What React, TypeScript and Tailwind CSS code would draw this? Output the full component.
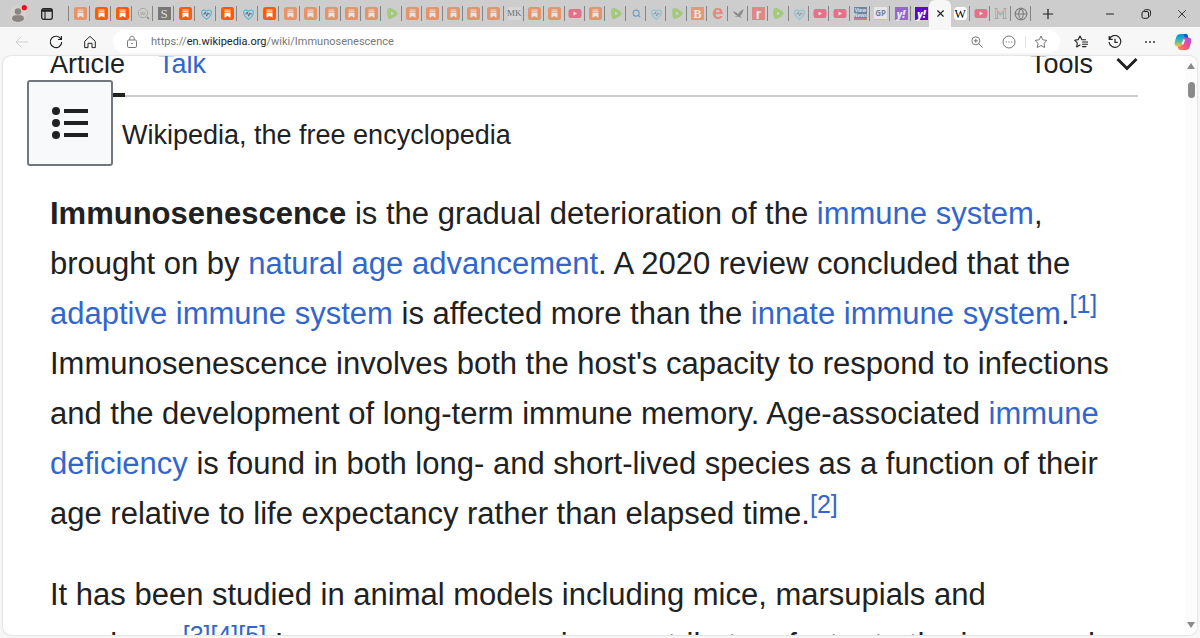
import type { ReactNode } from 'react'
import { clsx } from 'clsx'
import { Globe, Minus, Plus, Search, X } from 'lucide-react'

type TabKind =
  | 'substack' | 'finder' | 's' | 'heart' | 'rumble' | 'mk' | 'youtube' | 'search' | 'bitchute' | 'epoch'
  | 'bird' | 'r' | 'news' | 'gp' | 'yahoo' | 'active' | 'wiki' | 'mosaic' | 'globe'

type Tab = { kind: TabKind; title: string; awake?: boolean }

const tab = (kind: TabKind, title: string, awake = false): Tab => ({ kind, title, awake })
const substack = (awake = false) => tab('substack', 'Substack', awake)

const pinnedTabs: Tab[] = [
  substack(), substack(true), substack(true), tab('finder', 'Finder'), tab('s', 'S', true), substack(true),
  tab('heart', 'Health', true), substack(true), tab('heart', 'Health', true), substack(true), substack(),
]

const openTabs: Tab[] = [
  substack(), substack(), substack(), substack(), tab('rumble', 'Rumble'),
  substack(), substack(), substack(), substack(), substack(), tab('mk', 'MK'),
  substack(), substack(), tab('youtube', 'YouTube'), substack(), tab('rumble', 'Rumble'),
  tab('search', 'Search'), tab('heart', 'Health'), tab('rumble', 'Rumble'), tab('bitchute', 'BitChute'),
  tab('epoch', 'E'), tab('bird', 'Bird'), tab('r', 'R'), tab('rumble', 'Rumble'), tab('heart', 'Health'),
  tab('youtube', 'YouTube'), tab('youtube', 'YouTube'), tab('news', 'News'), tab('gp', 'GP'),
  tab('yahoo', 'Yahoo'), tab('yahoo', 'Yahoo', true), tab('active', 'Immunosenescence'),
  tab('wiki', 'Wikipedia', true), tab('youtube', 'YouTube'), tab('mosaic', 'M'), tab('globe', 'Site'),
]

function Letter({ className, children }: { className: string; children: ReactNode }) {
  return <span className={clsx('flex h-[13px] w-[13px] items-center justify-center leading-none', className)}>{children}</span>
}

function Favicon({ kind }: { kind: TabKind }) {
  switch (kind) {
    case 'substack':
      return (
        <svg viewBox="0 0 13 13" className="h-[13px] w-[13px]">
          <rect width="13" height="13" rx="2.5" fill="#ff5a0a" />
          <path d="M3.5 3h6M3.5 4.7h6" stroke="#fff" strokeWidth=".9" />
          <path d="M3.5 5.8h6v5L6.5 9l-3 1.8z" fill="#fff" />
        </svg>
      )
    case 'finder':
      return (
        <svg viewBox="0 0 13 13" className="h-[13px] w-[13px]" fill="none" stroke="#8d8573">
          <circle cx="6" cy="6" r="4.7" />
          <path d="M3.5 5.8h5M3.5 7.2h5" />
          <path d="m10 10 2 2" stroke="#5d4020" strokeWidth="1.5" />
        </svg>
      )
    case 'heart':
      return (
        <svg viewBox="0 0 14 14" className="h-[14px] w-[13px]" fill="none">
          <path d="M7 12.7C3.8 10.5 1.4 7.9 1.8 4.7 2.2 2.4 5 2.1 7 4.1 9 2 11.8 2.5 12.2 4.7 12.6 7.9 10.2 10.5 7 12.7Z" stroke="#4fb9da" strokeWidth="1.2" />
          <path d="M3.5 7h1.2l1-2.200 1.500 4.600 1.300-3.600.8 1.200h1.400" stroke="#24688e" strokeWidth=".9" />
        </svg>
      )
    case 'rumble':
      return (
        <svg viewBox="0 0 14 14" className="h-[13px] w-[13px]">
          <path d="M3.4 1.2c2.5-.3 6.9 2.4 8.6 4.5.7.9.7 1.7 0 2.6-1.7 2.1-6.1 4.8-8.6 4.5C1.2 12.4 1 4 1.7 2.5c.3-.7.8-1.2 1.7-1.3Z" fill="#7ac62c" />
          <path d="M5.5 5c1.1.4 2.2 1.1 3 2-.8.9-1.9 1.6-3 2z" fill="#e0e0e0" />
        </svg>
      )
    case 'youtube':
      return (
        <svg viewBox="0 0 14 13" className="h-[13px] w-[14px]">
          <rect x=".5" y="2" width="13" height="9" rx="2.3" fill="#f8174a" />
          <path d="M5.5 4.6v3.8L9 6.5z" fill="#fff" />
        </svg>
      )
    case 'bird':
      return (
        <svg viewBox="0 0 14 14" className="h-[13px] w-[13px]" fill="#4b4b4b">
          <path d="M1 4.500c2.400.4 4.200 1.500 5.700 3.200C7.700 5.400 9.800 3.500 13.200 2.500 11 5 11.800 7.500 8.800 9.500L10.500 12 7.400 10.500l-4.900-.3 3-.8C3.700 8.500 2.200 6.700 1 4.500Z" />
        </svg>
      )
    case 'mosaic':
      return (
        <svg viewBox="0 0 13 13" className="h-[13px] w-[13px]" fill="none" strokeWidth="1.2">
          <path d="M1.5 12V1.5l5 5 5-5V12" stroke="#e98572" />
          <path d="M3.5 12V5l3 3 3-3v7" stroke="#51a69e" />
          <path d="M.5 11.5h4M8.500 11.500h4M.5 1.500h3M9.500 1.500h3" stroke="#828282" />
        </svg>
      )
    case 'search':
      return <Search className="h-[9px] w-[9px] text-[#0d73c8]" strokeWidth={3} />
    case 'globe':
      return <Globe className="h-[14px] w-[14px] text-[#303030]" strokeWidth={1.8} />
    case 's':
      return <Letter className="bg-[#777] font-['Liberation_Serif',serif] text-[13px] text-[#ddd]">S</Letter>
    case 'mk':
      return <Letter className="bg-[#e0e0e0] font-['Liberation_Serif',serif] text-[9px] text-black">MK</Letter>
    case 'bitchute':
      return <Letter className="bg-[#ff651e] font-['Liberation_Serif',serif] text-[12px] font-bold text-white">B</Letter>
    case 'epoch':
      return <Letter className="pb-1 font-['Liberation_Sans',sans-serif] text-[20px] font-bold text-[#f34b36]">e</Letter>
    case 'r':
      return <Letter className="bg-[#ef4545] font-['Liberation_Sans',sans-serif] text-[14px] font-bold text-white">r</Letter>
    case 'news':
      return <Letter className="flex-col border-b-2 border-[#b8324d] bg-[#164174] font-['Liberation_Sans',sans-serif] text-[5px] font-bold text-white"><span>View</span><span>News</span></Letter>
    case 'gp':
      return <Letter className="border-b border-[#e2b65b] bg-white font-['Open_Sans',sans-serif] text-[8px] font-bold text-[#173b76]">GP</Letter>
    case 'yahoo':
      return <Letter className="bg-[#6001d2] font-['Open_Sans',sans-serif] text-[10px] font-extrabold italic text-white">y!</Letter>
    case 'wiki':
      return <Letter className="rounded-sm bg-white font-['Liberation_Serif',serif] text-[12px] text-black">W</Letter>
    default:
      return null
  }
}

function BrowserTab({ kind, title, awake, pinned }: Tab & { pinned?: boolean }) {
  const width = pinned ? 'w-[21px] shrink-0' : 'min-w-0 flex-1'
  if (kind === 'active') {
    return (
      <div className={clsx('relative z-10 flex justify-center', width)}>
        <button aria-label={`Close ${title}`} className="flex h-[27px] w-[22px] shrink-0 items-center justify-center rounded-t-md bg-[#f7f7f7]">
          <X className="h-[11px] w-[11px] text-[#222]" strokeWidth={2.5} />
        </button>
      </div>
    )
  }
  return (
    <button aria-label={title} className={clsx('flex h-[27px] items-center justify-center pl-0.5', width)}>
      <span className={clsx('flex flex-1 justify-center', !awake && 'opacity-50')}><Favicon kind={kind} /></span>
      <span className={clsx('h-[15px] w-px', title === 'Yahoo' && awake ? 'bg-transparent' : 'bg-[#858585]')} />
    </button>
  )
}

function TabBar() {
  return (
    <header className="flex h-[27px] shrink-0 items-center bg-[#cdcdcd]">
      <div className="flex w-[69px] shrink-0 items-center pl-[9px]">
        <button aria-label="Profile">
          <svg viewBox="0 0 18 18" className="h-[18px] w-[18px]">
            <circle cx="9" cy="9" r="9" fill="#d5d2cd" />
            <circle cx="9" cy="6.5" r="3.3" fill="#8a8580" />
            <path d="M3 14.2c0-3.6 2-3.9 6-3.9s6 .3 6 3.9c-1.4 1.7-3.4 2.7-6 2.7s-4.600-1-6-2.700Z" fill="#8a8580" />
            <circle cx="15.300" cy="2.700" r="2.600" fill="#e81123" />
          </svg>
        </button>
        <button aria-label="Tab actions" className="ml-[14px]">
          <svg viewBox="0 0 12 12" className="h-3 w-3" fill="none" stroke="#222">
            <rect x=".7" y=".7" width="10.600" height="10.600" rx="2" strokeWidth="1.300" />
            <path d="M1 2.500h10" strokeWidth="2.500" />
            <path d="M4 3v8" strokeWidth="1.100" />
          </svg>
        </button>
        <span className="ml-auto h-[15px] w-px bg-[#858585]" />
      </div>
      <nav aria-label="Tabs" className="flex min-w-0 flex-1">
        {pinnedTabs.map((t, i) => <BrowserTab key={i} {...t} pinned />)}
        {openTabs.map((t, i) => <BrowserTab key={i} {...t} />)}
      </nav>
      <div className="flex w-[169px] shrink-0 items-center text-[#222]">
        <button aria-label="New tab" className="ml-[9px]"><Plus className="h-4 w-4" strokeWidth={1.8} /></button>
        <button aria-label="Minimize" className="ml-[48px]"><Minus className="h-3 w-3" strokeWidth={2} /></button>
        <button aria-label="Restore" className="ml-6">
          <svg viewBox="0 0 12 12" className="h-3 w-3" fill="none" stroke="currentColor">
            <rect x="2" y="3.500" width="6.500" height="6.800" rx="1.500" />
            <path d="M4 3.300c0-1.300.6-1.600 1.500-1.600h2.700c1.500 0 2.300.8 2.300 2.300v2.700c0 .9-.3 1.500-1.500 1.700" />
          </svg>
        </button>
        <button aria-label="Close window" className="ml-[23px]"><X className="h-[14px] w-[14px]" strokeWidth={1.500} /></button>
      </div>
    </header>
  )
}

function Star({ list }: { list?: boolean }) {
  return (
    <svg viewBox="0 0 14 14" className="h-[14px] w-[14px]" fill="none" stroke="currentColor" strokeLinejoin="round">
      {list ? (
        <path d="M11.500 4.800 7.800 4.600 6 1 4.300 4.600.6 5.200l2.700 2.700-.6 4L6 10M8.500 7H14M8.500 9.300H14M8.500 11.600H12" strokeLinecap="round" strokeWidth="1.100" />
      ) : (
        <path d="m7 1 1.800 3.800 4.200.6-3 2.900.7 4.200L7 10.500l-3.700 2 .7-4.200-3-2.900 4.200-.6z" />
      )}
    </svg>
  )
}

function Copilot() {
  return (
    <svg viewBox="0 0 18 18" className="h-[18px] w-[18px]">
      <defs>
        <linearGradient id="cp-cool" x1="0" y1="0" x2="0" y2="1">
          <stop stopColor="#078bd9" /><stop offset=".45" stopColor="#22b9c8" /><stop offset="1" stopColor="#f4c52b" />
        </linearGradient>
        <linearGradient id="cp-warm" x1="1" y1="0" x2="0" y2="1">
          <stop stopColor="#a650ef" /><stop offset=".5" stopColor="#f04e91" /><stop offset="1" stopColor="#ff8b3d" />
        </linearGradient>
      </defs>
      <path d="M7.500 1h4.300c1.200 0 1.700.7 2 1.700l.6 2h-1.800c-1.500 0-2.100.6-2.500 1.900l-1.500 4.700c-.5 1.500-1 2-2.500 2H3.300C.7 13.300.2 11 .9 8.500L2.500 3.600C3.200 1.700 4.500 1 7.500 1Z" fill="url(#cp-cool)" />
      <path d="M10.500 17H6.200c-1.200 0-1.700-.7-2-1.700l-.6-2h1.800c1.500 0 2.100-.6 2.500-1.900l1.500-4.700c.5-1.500 1-2 2.500-2h2.800c2.600 0 3.100 2.300 2.400 4.800l-1.600 4.900c-.7 1.900-2 2.600-5 2.600Z" fill="url(#cp-warm)" />
      <path d="M9.800 1h2c1.200 0 1.700.7 2 1.700l.6 2h-2.500C10.500 4.700 10 3 9.800 1Z" fill="#2352cd" />
      <path d="M10.200 6.500 8.500 11.500" stroke="#fff" strokeWidth="1.800" />
    </svg>
  )
}

function Dots() {
  return (
    <svg viewBox="0 0 12 12" className="h-3 w-3" fill="currentColor">
      <circle cx="2" cy="6" r=".9" /><circle cx="6" cy="6" r=".9" /><circle cx="10" cy="6" r=".9" />
    </svg>
  )
}

function Toolbar() {
  return (
    <div className="flex h-[29px] shrink-0 items-center text-[#222]">
      <div className="flex w-[113px] shrink-0 items-center pl-[15px]">
        <button aria-label="Back" disabled className="text-[#cfcfcf]">
          <svg viewBox="0 0 14 14" className="h-[14px] w-[14px]" fill="none" stroke="currentColor">
            <path d="M13 7H1M6.500 1.500 1 7l5.500 5.500" />
          </svg>
        </button>
        <button aria-label="Refresh" className="ml-5">
          <svg viewBox="0 0 14 14" className="h-[14px] w-[14px]" fill="none" stroke="currentColor" strokeWidth="1.200">
            <path d="M12 4.200A5.700 5.700 0 1 0 12.700 7M12.400 1v3.500H9" />
          </svg>
        </button>
        <button aria-label="Home" className="ml-5">
          <svg viewBox="0 0 14 14" className="h-[14px] w-[14px]" fill="none" stroke="currentColor" strokeLinejoin="round">
            <path d="M1.700 6.300 7 1.400l5.300 4.900v6.300H9V8.300H5v4.300H1.700z" />
          </svg>
        </button>
      </div>
      <div className="flex h-[23px] min-w-0 flex-1 items-center rounded-full bg-white pr-3 pl-3 text-[#777]">
        <svg viewBox="0 0 14 14" className="h-[14px] w-[14px] shrink-0" fill="none" stroke="currentColor">
          <rect x="2.500" y="5" width="9" height="7.500" rx="1.300" />
          <path d="M4.800 5V3.200c0-2.600 4.400-2.600 4.400 0V5" />
          <circle cx="7" cy="8.700" r=".4" fill="currentColor" />
        </svg>
        <a href="https://en.wikipedia.org/wiki/Immunosenescence" className="ml-3 flex-1 truncate font-[Roboto,sans-serif] text-[11px] leading-4">
          https://<span className="text-[#222]">en.wikipedia.org</span>/wiki/Immunosenescence
        </a>
        <button aria-label="Zoom">
          <svg viewBox="0 0 12 12" className="h-3 w-3" fill="none" stroke="currentColor">
            <circle cx="4.800" cy="4.800" r="4" /><path d="m7.800 7.800 3.700 3.700M2.800 4.800h4M4.800 2.800v4" />
          </svg>
        </button>
        <button aria-label="Page actions" className="ml-[19px]">
          <svg viewBox="0 0 14 14" className="h-[14px] w-[14px]" fill="none" stroke="currentColor">
            <circle cx="7" cy="7" r="6" />
            <path d="M3.700 7h1.200M6.400 7h1.200M9.100 7h1.200" strokeWidth="1.200" />
          </svg>
        </button>
        <span className="ml-[9px] h-3 w-px bg-[#e3e3e3]" />
        <button aria-label="Add to favorites" className="ml-2"><Star /></button>
      </div>
      <div className="flex w-[140px] shrink-0 items-center pl-[14px]">
        <button aria-label="Favorites"><Star list /></button>
        <button aria-label="History" className="ml-5">
          <svg viewBox="0 0 14 14" className="h-[14px] w-[14px]" fill="none" stroke="currentColor" strokeWidth="1.200">
            <path d="M1.400 4.200A5.900 5.900 0 1 1 1 7M1.200 1v3.400h3.500M7 3.700v3.700h2.700" />
          </svg>
        </button>
        <button aria-label="Settings" className="ml-[22px]"><Dots /></button>
        <button aria-label="Copilot" className="ml-[18px]"><Copilot /></button>
      </div>
    </div>
  )
}

function Ref({ n }: { n: number }) {
  return <sup className="top-0 align-super text-[25px] leading-none"><Wiki to={`cite_note-${n}`}>[{n}]</Wiki></sup>
}

function Wiki({ to, children }: { to: string; children: ReactNode }) {
  return <a href={`#${to}`} className="text-[#3366cc]">{children}</a>
}

function Article() {
  return (
    <div className="min-w-0 flex-1 overflow-hidden pr-[47px] pl-[47px] font-['Liberation_Sans',Arial,sans-serif] text-[#202122]">
      <nav aria-label="Page" className="-mt-2 flex h-[49px] border-b-2 border-[#c8ccd1] text-[27px] leading-8">
        <a href="#article" className="h-[49px] border-b-4 border-[#202122]">Article</a>
        <a href="#talk" className="ml-[33px] text-[#3366cc]">Talk</a>
        <button className="ml-auto flex h-8 items-center gap-[23px]">
          Tools
          <svg viewBox="0 0 22 14" className="h-[14px] w-[22px]" fill="none" stroke="currentColor" strokeWidth="3">
            <path d="m1.500 2 9.500 9.500L20.500 2" />
          </svg>
        </button>
      </nav>
      <p className="flex gap-[9px] pt-[23px] text-[27px] leading-[30px]"><span>From</span> <span>Wikipedia, the free encyclopedia</span></p>
      <main className="pt-[39px] text-[31px] leading-[50px]">
        <p>
          <b>Immunosenescence</b> is the gradual deterioration of the <Wiki to="immune-system">immune system</Wiki>, brought on
          by <Wiki to="ageing">natural age advancement</Wiki>. A 2020 review concluded that
          the <Wiki to="adaptive">adaptive immune system</Wiki> is affected more than
          the <Wiki to="innate">innate immune system</Wiki>.<Ref n={1} /> Immunosenescence involves both the host's capacity
          to respond to infections and the development of long-term immune memory.
          Age-associated <Wiki to="deficiency">immune deficiency</Wiki> is found in both long- and short-lived species as a
          function of their age relative to life expectancy rather than elapsed time.<Ref n={2} />
        </p>
        <p className="mt-[31px]">
          It has been studied in animal models including mice, marsupials and{' '}
          <span className="whitespace-nowrap">monkeys.<Ref n={3} /><Ref n={4} /><Ref n={5} /></span> Immunosenescence
          is a contributory factor to the increased
        </p>
      </main>
    </div>
  )
}

export default function App() {
  return (
    <div className="flex h-screen flex-col overflow-hidden bg-[#f7f7f7]">
      <TabBar />
      <Toolbar />
      <div className="relative mx-[3px] mb-[3px] flex min-h-0 flex-1 overflow-hidden rounded-lg bg-white shadow-[0_0_2px_rgba(0,0,0,0.25)]">
        <Article />
        <div className="flex w-3 shrink-0 flex-col items-center bg-[#fcfcfc] py-[7px]">
          <span className="border-x-4 border-b-[6px] border-x-transparent border-b-[#8a8a8a]" />
          <span className="mt-[13px] h-4 w-[7px] rounded-full bg-[#8a8a8a]" />
          <span className="mt-auto border-x-4 border-t-[6px] border-x-transparent border-t-[#8a8a8a]" />
        </div>
        {/* sticky contents button floats above the article */}
        <button aria-label="Table of contents" className="absolute top-6 left-6 flex h-[86px] w-[86px] items-center justify-center rounded-[3px] border-2 border-[#72777d] bg-[#f8f9fa]">
          <svg viewBox="0 0 36 32" className="h-8 w-9" fill="#202122">
            <circle cx="4" cy="4" r="4" /><circle cx="4" cy="16" r="4" /><circle cx="4" cy="28" r="4" />
            <path d="M12 2h24v4H12zM12 14h24v4H12zM12 26h24v4H12z" />
          </svg>
        </button>
      </div>
    </div>
  )
}
